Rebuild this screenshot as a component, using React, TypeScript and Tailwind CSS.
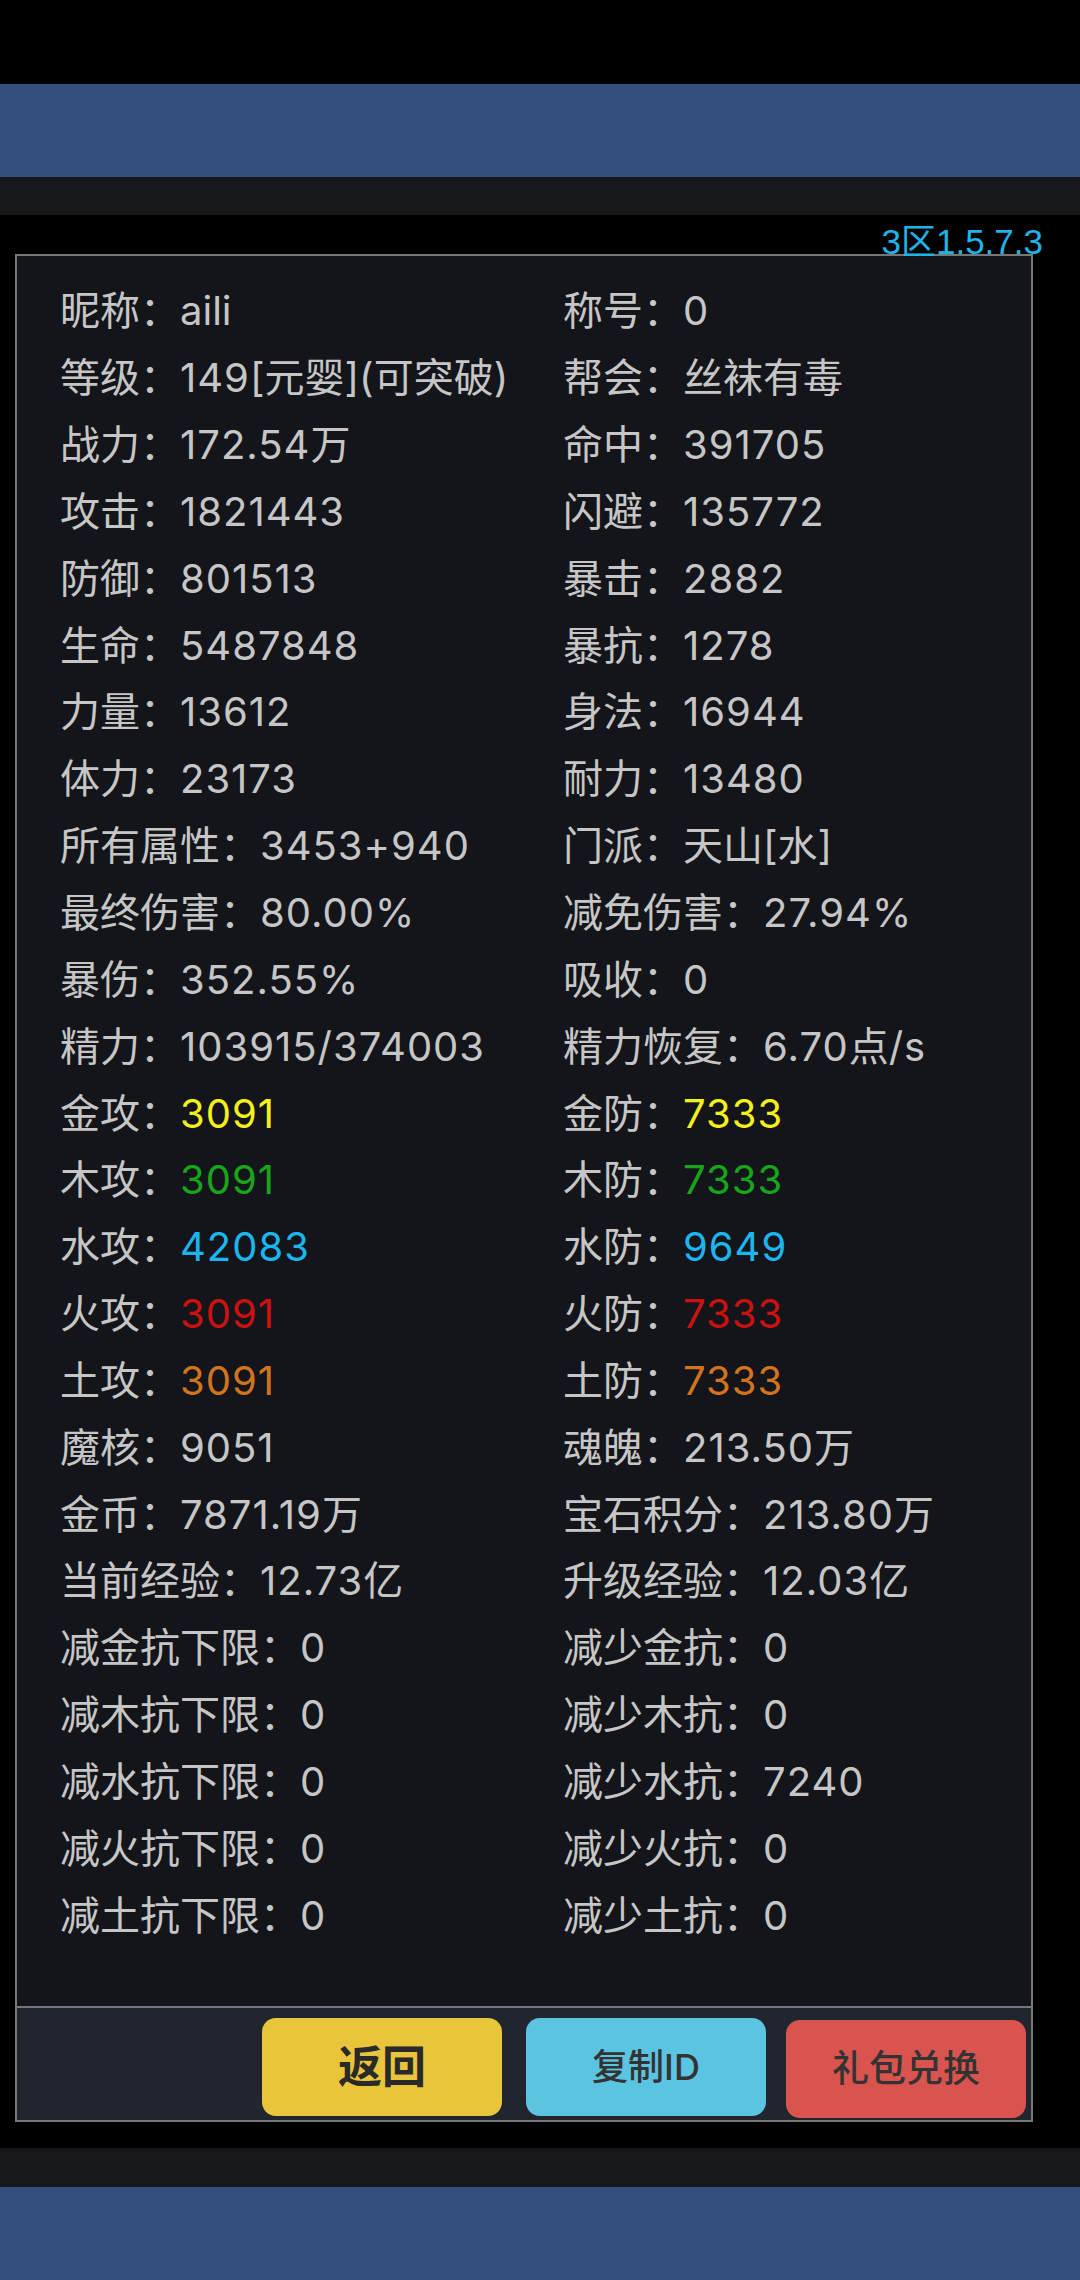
import React from 'react';

type Stat = { label: string; value: string; color?: string };

const rows: [Stat, Stat][] = [
  [{ label: '昵称', value: 'aili' }, { label: '称号', value: '0' }],
  [{ label: '等级', value: '149[元婴](可突破)' }, { label: '帮会', value: '丝袜有毒' }],
  [{ label: '战力', value: '172.54万' }, { label: '命中', value: '391705' }],
  [{ label: '攻击', value: '1821443' }, { label: '闪避', value: '135772' }],
  [{ label: '防御', value: '801513' }, { label: '暴击', value: '2882' }],
  [{ label: '生命', value: '5487848' }, { label: '暴抗', value: '1278' }],
  [{ label: '力量', value: '13612' }, { label: '身法', value: '16944' }],
  [{ label: '体力', value: '23173' }, { label: '耐力', value: '13480' }],
  [{ label: '所有属性', value: '3453+940' }, { label: '门派', value: '天山[水]' }],
  [{ label: '最终伤害', value: '80.00%' }, { label: '减免伤害', value: '27.94%' }],
  [{ label: '暴伤', value: '352.55%' }, { label: '吸收', value: '0' }],
  [{ label: '精力', value: '103915/374003' }, { label: '精力恢复', value: '6.70点/s' }],
  [{ label: '金攻', value: '3091', color: 'text-[#f4f01c]' }, { label: '金防', value: '7333', color: 'text-[#f4f01c]' }],
  [{ label: '木攻', value: '3091', color: 'text-[#19a51a]' }, { label: '木防', value: '7333', color: 'text-[#19a51a]' }],
  [{ label: '水攻', value: '42083', color: 'text-[#1cb6ee]' }, { label: '水防', value: '9649', color: 'text-[#1cb6ee]' }],
  [{ label: '火攻', value: '3091', color: 'text-[#cc1111]' }, { label: '火防', value: '7333', color: 'text-[#cc1111]' }],
  [{ label: '土攻', value: '3091', color: 'text-[#d2731f]' }, { label: '土防', value: '7333', color: 'text-[#d2731f]' }],
  [{ label: '魔核', value: '9051' }, { label: '魂魄', value: '213.50万' }],
  [{ label: '金币', value: '7871.19万' }, { label: '宝石积分', value: '213.80万' }],
  [{ label: '当前经验', value: '12.73亿' }, { label: '升级经验', value: '12.03亿' }],
  [{ label: '减金抗下限', value: '0' }, { label: '减少金抗', value: '0' }],
  [{ label: '减木抗下限', value: '0' }, { label: '减少木抗', value: '0' }],
  [{ label: '减水抗下限', value: '0' }, { label: '减少水抗', value: '7240' }],
  [{ label: '减火抗下限', value: '0' }, { label: '减少火抗', value: '0' }],
  [{ label: '减土抗下限', value: '0' }, { label: '减少土抗', value: '0' }],
];

// numbers in the source are a touch wider than Inter's, so space them out a bit
function Value({ text }: { text: string }) {
  const parts = text.match(/[0-9.%+/s]+|[^0-9.%+/s]+/g) ?? [];
  return (
    <>
      {parts.map((p, i) =>
        /^[0-9.%+/s]+$/.test(p) ? (
          <span key={i} className="tracking-[1px]">
            {p}
          </span>
        ) : (
          <span key={i}>{p}</span>
        )
      )}
    </>
  );
}

function Cell({ stat }: { stat: Stat }) {
  return (
    <div className="h-[66.85px] flex items-center whitespace-nowrap">
      <span>{stat.label}：</span>
      <span className={stat.color ?? ''}>
        <Value text={stat.value} />
      </span>
    </div>
  );
}

export default function App() {
  return (
    <div className="w-[1080px] h-[2280px] bg-black flex flex-col font-['Inter','Noto_Sans_CJK_SC',sans-serif]">
      <div className="h-[84px] bg-black" />
      <div className="h-[93px] bg-[#32507b]" />
      <div className="h-[38px] bg-[#15171b]" />

      {/* version tag */}
      <div className="relative z-10 h-[39px] flex justify-end pr-[37px] pt-[9px]">
        <span className="text-[35px] leading-none text-[#1db4e8] font-['Liberation_Sans','Noto_Sans_CJK_SC',sans-serif]">
          3区1.5.7.3
        </span>
      </div>

      {/* stats panel */}
      <div className="ml-[15px] w-[1018px] border-2 border-[#777] bg-[#14151a] flex flex-col">
        <div className="grid grid-cols-[503px_1fr] pl-[43px] pt-[22px] pb-[57px] text-[40px] text-[#c6c6c6]">
          {rows.map(([l, r], i) => (
            <React.Fragment key={i}>
              <Cell stat={l} />
              <Cell stat={r} />
            </React.Fragment>
          ))}
        </div>
        <div className="h-[114px] border-t-2 border-[#777] bg-[#21262e] flex justify-end items-start pt-[10px] pr-[5px]">
          <button className="w-[240px] h-[98px] rounded-[14px] bg-[#e8c53b] text-[44px] font-semibold text-[#2a2a2a]">
            返回
          </button>
          <button className="ml-[24px] w-[240px] h-[98px] rounded-[14px] bg-[#5bc4e1] text-[36px] font-medium text-[#333]">
            复制ID
          </button>
          <button className="ml-[20px] mt-[2px] w-[240px] h-[98px] rounded-[14px] bg-[#d9534f] text-[37px] font-medium text-[#333]">
            礼包兑换
          </button>
        </div>
      </div>

      <div className="h-[26px] bg-black" />
      <div className="h-[39px] bg-[#15171b]" />
      <div className="flex-1 bg-[#32507b]" />
    </div>
  );
}
